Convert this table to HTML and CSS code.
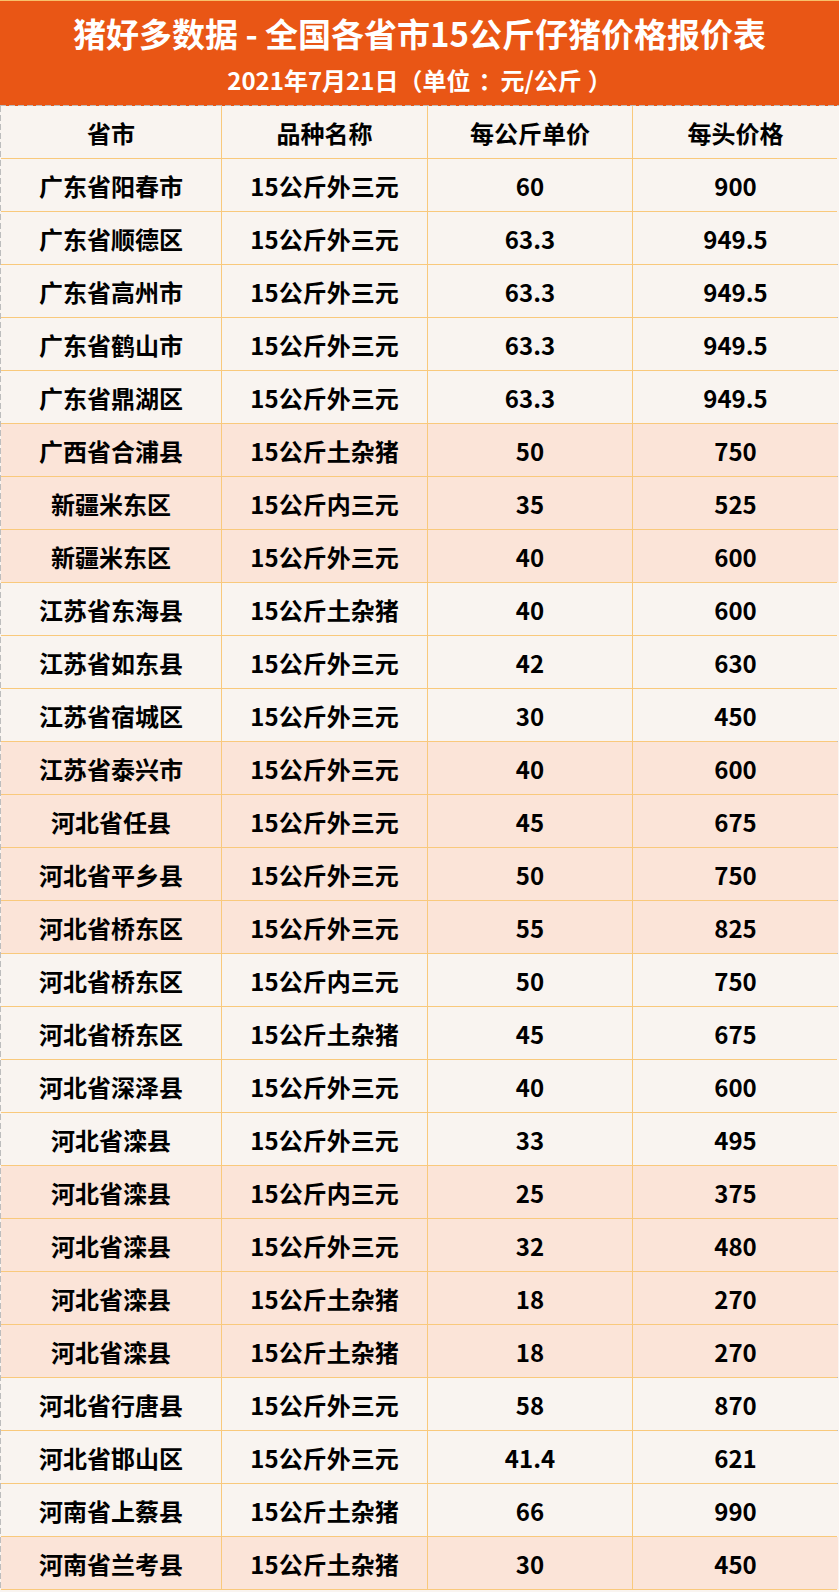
FILE: index.html
```html
<!DOCTYPE html>
<html lang="zh-CN">
<head>
<meta charset="utf-8">
<title>猪好多数据 - 全国各省市15公斤仔猪价格报价表</title>
<link rel="stylesheet" href="styles.css">
</head>
<body>
<div class="sheet">
  <header class="banner">
    <h1 class="title">猪好多数据 - 全国各省市15公斤仔猪价格报价表</h1>
    <p class="subtitle">2021年7月21日（单位<span class="colon">：</span>元/公斤<span class="close">）</span></p>
  </header>
  <div class="table">
    <div class="row light"><div class="cell">省市</div><div class="cell">品种名称</div><div class="cell">每公斤单价</div><div class="cell">每头价格</div></div>
    <div class="row light"><div class="cell">广东省阳春市</div><div class="cell">15公斤外三元</div><div class="cell">60</div><div class="cell">900</div></div>
    <div class="row light"><div class="cell">广东省顺德区</div><div class="cell">15公斤外三元</div><div class="cell">63.3</div><div class="cell">949.5</div></div>
    <div class="row light"><div class="cell">广东省高州市</div><div class="cell">15公斤外三元</div><div class="cell">63.3</div><div class="cell">949.5</div></div>
    <div class="row light"><div class="cell">广东省鹤山市</div><div class="cell">15公斤外三元</div><div class="cell">63.3</div><div class="cell">949.5</div></div>
    <div class="row light"><div class="cell">广东省鼎湖区</div><div class="cell">15公斤外三元</div><div class="cell">63.3</div><div class="cell">949.5</div></div>
    <div class="row peach"><div class="cell">广西省合浦县</div><div class="cell">15公斤土杂猪</div><div class="cell">50</div><div class="cell">750</div></div>
    <div class="row peach"><div class="cell">新疆米东区</div><div class="cell">15公斤内三元</div><div class="cell">35</div><div class="cell">525</div></div>
    <div class="row peach"><div class="cell">新疆米东区</div><div class="cell">15公斤外三元</div><div class="cell">40</div><div class="cell">600</div></div>
    <div class="row light"><div class="cell">江苏省东海县</div><div class="cell">15公斤土杂猪</div><div class="cell">40</div><div class="cell">600</div></div>
    <div class="row light"><div class="cell">江苏省如东县</div><div class="cell">15公斤外三元</div><div class="cell">42</div><div class="cell">630</div></div>
    <div class="row light"><div class="cell">江苏省宿城区</div><div class="cell">15公斤外三元</div><div class="cell">30</div><div class="cell">450</div></div>
    <div class="row peach"><div class="cell">江苏省泰兴市</div><div class="cell">15公斤外三元</div><div class="cell">40</div><div class="cell">600</div></div>
    <div class="row peach"><div class="cell">河北省任县</div><div class="cell">15公斤外三元</div><div class="cell">45</div><div class="cell">675</div></div>
    <div class="row peach"><div class="cell">河北省平乡县</div><div class="cell">15公斤外三元</div><div class="cell">50</div><div class="cell">750</div></div>
    <div class="row peach"><div class="cell">河北省桥东区</div><div class="cell">15公斤外三元</div><div class="cell">55</div><div class="cell">825</div></div>
    <div class="row light"><div class="cell">河北省桥东区</div><div class="cell">15公斤内三元</div><div class="cell">50</div><div class="cell">750</div></div>
    <div class="row light"><div class="cell">河北省桥东区</div><div class="cell">15公斤土杂猪</div><div class="cell">45</div><div class="cell">675</div></div>
    <div class="row light"><div class="cell">河北省深泽县</div><div class="cell">15公斤外三元</div><div class="cell">40</div><div class="cell">600</div></div>
    <div class="row light"><div class="cell">河北省滦县</div><div class="cell">15公斤外三元</div><div class="cell">33</div><div class="cell">495</div></div>
    <div class="row peach"><div class="cell">河北省滦县</div><div class="cell">15公斤内三元</div><div class="cell">25</div><div class="cell">375</div></div>
    <div class="row peach"><div class="cell">河北省滦县</div><div class="cell">15公斤外三元</div><div class="cell">32</div><div class="cell">480</div></div>
    <div class="row peach"><div class="cell">河北省滦县</div><div class="cell">15公斤土杂猪</div><div class="cell">18</div><div class="cell">270</div></div>
    <div class="row peach"><div class="cell">河北省滦县</div><div class="cell">15公斤土杂猪</div><div class="cell">18</div><div class="cell">270</div></div>
    <div class="row light"><div class="cell">河北省行唐县</div><div class="cell">15公斤外三元</div><div class="cell">58</div><div class="cell">870</div></div>
    <div class="row light"><div class="cell">河北省邯山区</div><div class="cell">15公斤外三元</div><div class="cell">41.4</div><div class="cell">621</div></div>
    <div class="row light"><div class="cell">河南省上蔡县</div><div class="cell">15公斤土杂猪</div><div class="cell">66</div><div class="cell">990</div></div>
    <div class="row peach"><div class="cell">河南省兰考县</div><div class="cell">15公斤土杂猪</div><div class="cell">30</div><div class="cell">450</div></div>
  </div>
</div>
</body>
</html>
```
FILE: styles.css
```css
html, body {
  margin: 0;
  padding: 0;
  background: #f9f4f0;
}
.sheet {
  width: 839px;
  font-family: "Noto Sans CJK SC", "Noto Sans", sans-serif;
  font-weight: 700;
  color: #000;
}
.banner {
  box-sizing: border-box;
  height: 106px;
  border-top: 1px solid #f8c16a;
  background:
    repeating-linear-gradient(to right, #bdbdbd 0 6px, transparent 6px 9px) left bottom / 100% 1px no-repeat,
    #e95615;
  display: flex;
  flex-direction: column;
  align-items: center;
  padding-top: 12px;
}
.title {
  margin: 0;
  font-size: 33px;
  line-height: 40px;
  font-weight: 700;
  color: #fff;
  white-space: nowrap;
}
.subtitle {
  margin: 12px 0 0;
  font-size: 24px;
  line-height: 30px;
  color: #fff;
  white-space: nowrap;
}
.colon {
  margin-left: 8px;
  margin-right: -2px;
}
.close {
  margin-left: 6px;
}
.table {
  box-sizing: border-box;
  width: 839px;
  padding-left: 1px;
  padding-right: 2px;
  background:
    repeating-linear-gradient(to bottom, #bdbdbd 0 6px, transparent 6px 9px) left top / 1px 100% no-repeat,
    repeating-linear-gradient(to bottom, #bdbdbd 0 6px, transparent 6px 9px) right 1px top / 1px 100% no-repeat,
    #f9f4f0;
}
.row {
  display: grid;
  grid-template-columns: 220px 205px 204px 205px;
  column-gap: 1px;
  background: #f9c97c;
  border-bottom: 1px solid #f9c97c;
}
.cell {
  height: 52px;
  display: flex;
  align-items: center;
  justify-content: center;
  font-size: 24px;
  white-space: nowrap;
}
.light .cell {
  background: #f9f4f0;
}
.peach .cell {
  background: #fbe4d8;
}
```
